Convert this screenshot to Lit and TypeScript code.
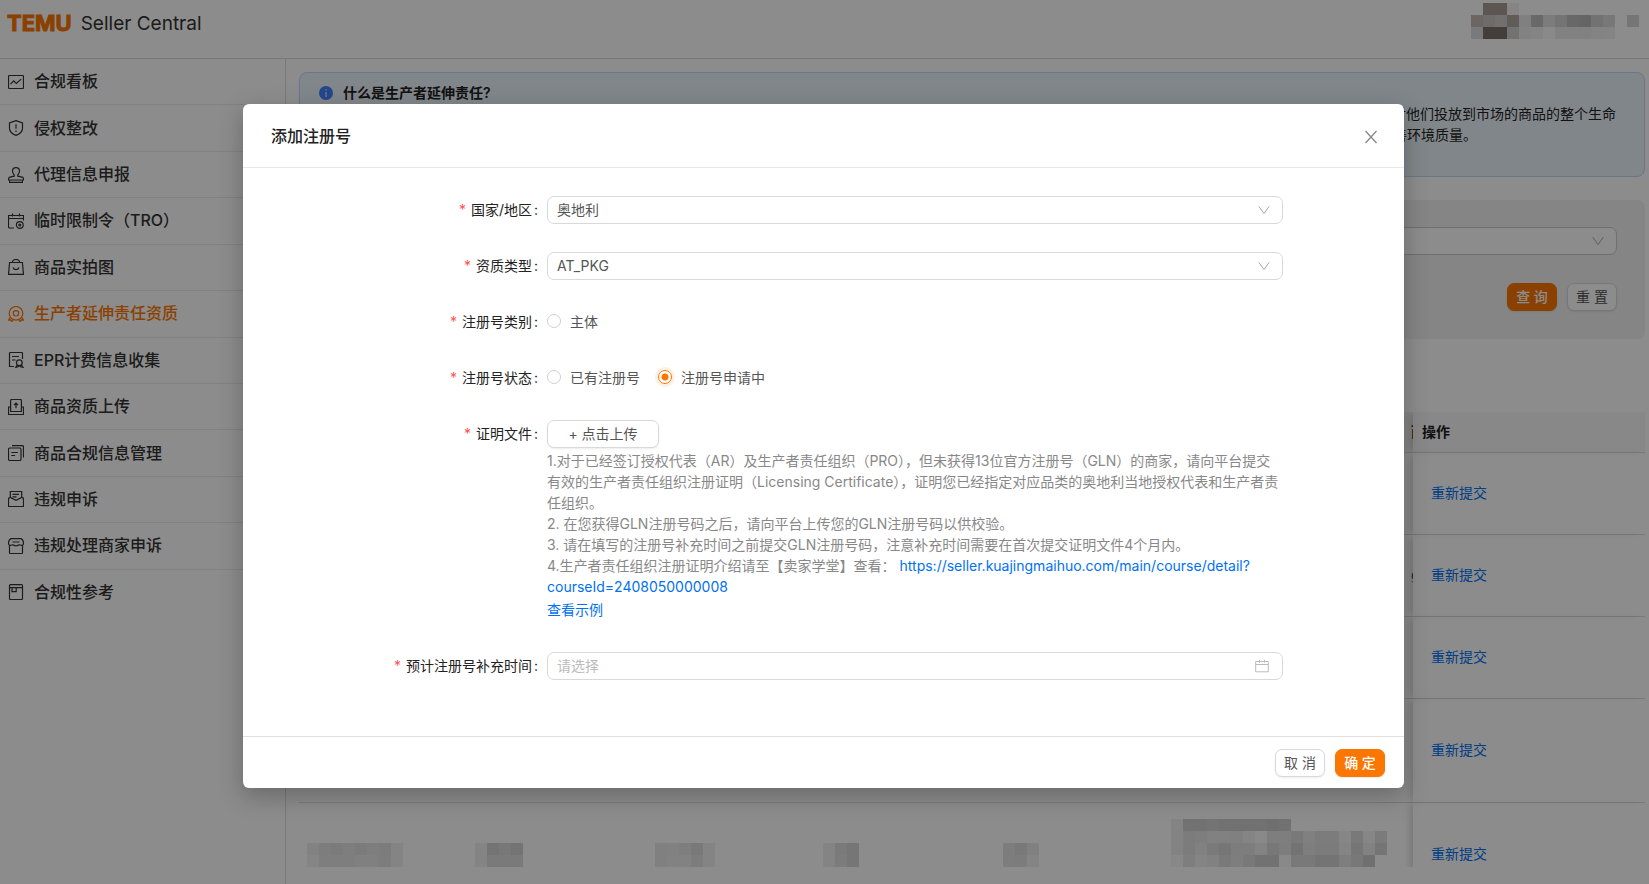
import { LitElement, html, svg, css, nothing } from "lit";
import { customElement, property, state } from "lit/decorators.js";
import { classMap } from "lit/directives/class-map.js";

const icons: Record<string, unknown> = {
  chart: svg`<rect x="0.5" y="1.5" width="15" height="13" rx="1"/><path d="M2.5 10.2 5.7 6.9l2.6 2.5 4.9-4.3"/>`,
  shield: svg`<path d="M8 .6 14.5 3v5.2c0 3.3-2.6 5.7-6.5 7.2-3.9-1.5-6.500-3.900-6.500-7.200V3z"/><path d="M8 4.200v4.600M8 10.400v1.600"/>`,
  stamp: svg`<path d="M6.200 7.800C5 6.600 4.500 5.600 4.500 4.200a3.500 3.500 0 0 1 7 0c0 1.400-.5 2.400-1.700 3.600v1.400l4.400 1c.8.2 1.300.8 1.300 1.500v1.300H.6v-1.300c0-.7.5-1.300 1.300-1.500l4.300-1z"/><path d="M1.600 13.200v2.200h12.800v-2.200"/>`,
  calendar: svg`<path d="M15.500 7.500v-5h-15v11.300a1.200 1.200 0 0 0 1.200 1.200H6M.5 5.500h15M4.500.5v3M11.500.5v3"/><circle cx="11.800" cy="12" r="3.400"/><circle cx="11.800" cy="12" r="1"/>`,
  bag: svg`<path d="M1.600 3.500h12.800l1.100 11.900H.5z"/><path d="M4.500 3.500a3.500 3 0 0 1 7 0M5 8.500c.5 1.400 1.600 2.200 3 2.200s2.500-.8 3-2.200"/>`,
  medal: svg`<circle cx="8" cy="7.300" r="6.800"/><circle cx="8" cy="7.300" r="2.700"/><path d="M2.400 11.300.6 14l2.200-.2.900 2 1.800-2.600M13.600 11.300l1.800 2.700-2.200-.2-.9 2-1.800-2.600"/>`,
  bill: svg`<path d="M14.500 7V1.500a1 1 0 0 0-1-1h-11a1 1 0 0 0-1 1v13h4.500M4 4.500h7M4 8h3.500"/><circle cx="11.300" cy="10.800" r="2.900"/><path d="m9.300 12.900-1.500 2.400 1.700-.1M13.300 12.900l1.700 2.400-1.700-.1M9.500 15l1.800-1.300L13.200 15"/>`,
  upload: svg`<path d="M2.600 12.500v-11a1 1 0 0 1 1-1h8.800a1 1 0 0 1 1 1v11z"/><path d="M2.600 8H.5v7.500h15V8h-2.100M8 9.300V4.300M6 6l2-1.900L10 6"/>`,
  docs: svg`<rect x="0.500" y="3" width="12.500" height="12.500" rx="1.200"/><path d="M4 .6h10.300a1.200 1.200 0 0 1 1.200 1.200v10.700M3.300 7.500h6.500M3.300 10.500h3.800"/>`,
  appeal: svg`<path d="M2.300 6.500v-6h11.400v6M4.500 3.300h6.500M4.500 5.800h4"/><path d="M.5 7.300 2.300 6.500 8 9.300l5.700-2.800 1.800.8v8.200H.5z"/>`,
  shop: svg`<path d="M3 .6h10c1.500.8 2.500 2.600 2.500 4.400 0 1.500-.8 2.400-1.700 2.400-1.200 0-1.900-.6-2.600-.6s-1.400 1-3.200 1-2.500-1-3.200-1-1.400.6-2.600.6C1.300 7.400.5 6.500.5 5c0-1.800 1-3.600 2.500-4.400z"/><path d="M1.500 7.500v7a1 1 0 0 0 1 1h11a1 1 0 0 0 1-1v-7M4.500 4h7"/>`,
  book: svg`<rect x="1.500" y="0.700" width="13" height="14.800" rx="1"/><path d="M1.500 3.600h13M4 3.600v4h4.200v-4"/>`,
};

const menu: [string, string][] = [
  ["chart", "合规看板"],
  ["shield", "侵权整改"],
  ["stamp", "代理信息申报"],
  ["calendar", "临时限制令（TRO）"],
  ["bag", "商品实拍图"],
  ["medal", "生产者延伸责任资质"],
  ["bill", "EPR计费信息收集"],
  ["upload", "商品资质上传"],
  ["docs", "商品合规信息管理"],
  ["appeal", "违规申诉"],
  ["shop", "违规处理商家申诉"],
  ["book", "合规性参考"],
];

const accountTiles = [
  "#fff #a89c95 #a89c95 #f4f2f0 - - - - - - - - - -",
  "#c4bab3 #c9c3c0 #d0ccca #b3a8a2 #e9e9e9 #bfbfbf #e2e2e2 #d4d4d4 #bdbdbd #b9b9b9 #cfcfcf #dadada - #d8d8d8",
  "#dedede #7b716b #7b716b #cfcfcf #ededed #f0f0f0 #fafafa #ebebeb #ebebeb #ececec #efefef #f0f0f0 - -",
];

const rowTiles: string[][] = [
  ["#ededed #e4e4e4 #e1e1e1 #e6e6e6 #e1e1e1 #e6e6e6 #e2e2e2 #f1f1f1", "#f3f3f3 #e6e6e6 #e6e6e6 #e6e6e6 #e9e9e9 #e9e9e9 #e4e4e4 #f1f1f1"],
  ["#f0f0f0 #d4d4d4 #dadada #d4d4d4", "#f0f0f0 #dedede #dedede #dedede"],
  ["#eaeaea #ebebeb #e5e5e5 #dcdcdc #f0f0f0", "#eaeaea #ededed #ededed #e4e4e4 #f0f0f0"],
  ["#f0f0f0 #dfdfdf #d8d8d8", "#f0f0f0 #e2e2e2 #d8d8d8"],
  ["#e4e4e4 #dddddd #eaeaea", "#e4e4e4 #e2e2e2 #f1f1f1"],
  [
    "#f0f0f0 #d0d0d0 #d0d0d0 #d4d4d4 #cecece #cecece #cecece #cecece #cacaca #cecece - - - - - - - -",
    "#eeeeee #e2e2e2 #e6e6e6 #ebebeb #ebebeb #e9e9e9 #f0f0f0 #fafafa #e6e6e6 #e6e6e6 #dcdcdc #eaeaea #e2e2e2 #e2e2e2 #f4f4f4 #dcdcdc #f4f4f4 #e0e0e0",
    "#eeeeee #e2e2e2 #ebebeb #dedede #d8d8d8 #e4e4e4 #e4e4e4 #efefef #dadada #e4e4e4 #d2d2d2 #e6e6e6 #e1e1e1 #e1e1e1 #f0f0f0 #d8d8d8 #ededed #d6d6d6",
    "#f8f8f8 #e6e6e6 #f0f0f0 #ebebeb #dcdcdc #e6e6e6 #dcdcdc #d0d0d0 #d0d0d0 #fafafa #dcdcdc #dcdcdc #d4d4d4 #d4d4d4 #e6e6e6 #dadada #cccccc -",
  ],
];

const arrow = html`<svg class="arrow" viewBox="0 0 12 12" aria-hidden="true"><path d="M.7 2.200 6 9.600l5.300-7.400"/></svg>`;

@customElement("pixel-tiles")
class PixelTiles extends LitElement {
  @property({ attribute: false }) rows: string[] = [];
  static styles = css`
    :host { display: block; }
    .line { display: flex; }
    .tile { width: 12px; height: 12px; flex: none; }
  `;
  render() {
    return this.rows.map(
      (row) => html`<div class="line">
        ${row.split(" ").map((c) => html`<i class="tile" style=${c === "-" ? nothing : `background:${c}`}></i>`)}
      </div>`
    );
  }
}

@customElement("app-root")
class AppRoot extends LitElement {
  @state() private status = "pending";

  static styles = css`
    :host {
      display: block;
      height: 100vh;
      overflow: hidden;
      position: relative;
      background: #fff;
      color: #333;
      font: 14px/21px Inter, "Noto Sans CJK SC", sans-serif;
    }
    * { box-sizing: border-box; }
    button, input, select { font: inherit; color: inherit; margin: 0; }
    a { color: #0071f3; text-decoration: none; }
    svg { fill: none; stroke: currentColor; display: block; flex: none; }

    .page { height: 100%; display: flex; flex-direction: column; }
    .header {
      height: 59px;
      flex: none;
      display: flex;
      justify-content: space-between;
      align-items: flex-start;
      border-bottom: 1px solid #dcdcdc;
      padding: 3px 10px 0 7px;
    }
    .brand { display: flex; align-items: center; gap: 9px; height: 40px; }
    .logo { font-size: 22px; font-weight: 700; color: #fb7701; -webkit-text-stroke: 1px #fb7701; }
    .product { font-size: 19px; }
    .body { flex: 1; min-height: 0; display: flex; }

    .side { width: 286px; flex: none; border-right: 1px solid #dcdcdc; }
    .menu { list-style: none; margin: 0; padding: 0; display: grid; grid-auto-rows: 1fr; min-height: 557px; }
    .entry { border-bottom: 1px solid #ebebeb; display: flex; }
    .entry:last-child { border-color: transparent; }
    .entry a { flex: 1; display: flex; align-items: center; gap: 10px; padding-left: 8px; font-size: 16px; font-weight: 500; color: #333; }
    .entry svg { width: 16px; height: 16px; stroke-width: 1.2; }
    .entry .current { color: #fb7701; }

    .main { flex: 1; min-width: 0; padding: 13px 4px 17px 13px; display: flex; flex-direction: column; }
    .notice {
      flex: none;
      height: 105px;
      border: 1px solid #c0d8ff;
      border-radius: 8px;
      background: #ebf5fc;
      padding: 9px 27px 0 19px;
      display: flex;
      gap: 10px;
    }
    .notice svg { width: 14px; height: 14px; margin-top: 4px; }
    .notice h2 { margin: 0; font-size: 14px; line-height: 21px; font-weight: 600; color: #222; }
    .notice p { margin: 0; color: #222; }

    .filters {
      flex: none;
      margin-top: 23px;
      height: 139px;
      border-radius: 8px;
      background: #f2f2f2;
      padding: 27px 28px;
      display: flex;
      flex-direction: column;
      align-items: flex-end;
      gap: 28px;
    }
    .filters .field { width: 100%; }
    .actions { display: flex; gap: 10px; }

    .field { position: relative; display: flex; align-items: center; }
    .box {
      width: 100%;
      height: 28px;
      border: 1px solid #d9d9d9;
      border-radius: 7px;
      background: #fff;
      padding: 0 32px 1px 9px;
      color: #555;
      appearance: none;
      outline: none;
    }
    .filters .box { border-color: #ccc; }
    .box::placeholder { color: #bbb; opacity: 1; }
    .arrow { position: absolute; right: 13px; width: 12px; height: 12px; color: #aaa; pointer-events: none; }
    .cal { position: absolute; right: 14px; width: 14px; height: 14px; color: #bbb; pointer-events: none; }

    .btn {
      height: 28px;
      width: 50px;
      padding: 0 0 1px;
      border: 1px solid #d9d9d9;
      border-radius: 7px;
      background: #fff;
      color: #555;
      line-height: 20px;
      white-space: nowrap;
      box-shadow: 0 1px 2px rgba(0, 0, 0, 0.08);
    }
    .btn.primary { background: #fb7701; border-color: #fb7701; color: #fff; font-weight: 500; }
    .btn.upload { width: 112px; }

    .scroll { flex: 1; min-height: 0; margin-top: 73px; overflow: hidden; }
    .grid { width: 100%; border-collapse: separate; border-spacing: 0; table-layout: fixed; }
    .grid th { height: 41px; text-align: left; font-weight: 600; color: #222; background: #f7f7f7; }
    .grid th, .grid td { border-bottom: 1px solid #dcdcdc; padding: 0 8px; vertical-align: middle; }
    .grid .tail { overflow: hidden; white-space: nowrap; padding: 0 0 2px 8px; text-overflow: clip; }
    .grid .ops { padding: 0 0 2px 18px; box-shadow: -6px 0 6px -2px rgba(0, 0, 0, 0.12); }
    .grid th.ops { padding-left: 9px; }
    .grid .item { padding-bottom: 24px; }
    .short td { height: 82px; }
    .tall td { height: 104px; }
    .c1 { width: 168px; }
    .c2 { width: 180px; }
    .c6 { width: 240px; }
    .c7 { width: 10px; }
    .c8 { width: 232px; }

    .mask {
      position: absolute;
      inset: 0;
      background: rgba(0, 0, 0, 0.45);
      padding: 104px 245px 0 243px;
    }
    .dialog { border-radius: 6px; background: #fff; box-shadow: 0 8px 24px rgba(0, 0, 0, 0.25); }
    .top {
      height: 64px;
      display: flex;
      align-items: center;
      justify-content: space-between;
      padding: 2px 26px 0 28px;
      border-bottom: 1px solid #e8e8e8;
    }
    .top h1 { margin: 0; font-size: 16px; font-weight: 500; color: #222; }
    .close { border: 0; background: none; padding: 0; width: 14px; height: 14px; color: #888; }
    .close svg { width: 14px; height: 14px; }
    .form { display: grid; gap: 28px; padding: 28px 121px 56px 0; }
    .row { display: grid; grid-template-columns: 295px minmax(0, 1fr); column-gap: 9px; border: 0; margin: 0; padding: 0; }
    .name { line-height: 28px; text-align: right; color: #222; }
    .name::before { content: "*"; color: #ff5252; margin-right: 5px; }
    .name::after { content: ":"; margin-left: 2px; }
    .choices { display: flex; align-items: center; gap: 18px; height: 26px; color: #555; }
    .choice { display: flex; align-items: center; gap: 9px; }
    .radio {
      appearance: none;
      width: 14px;
      height: 14px;
      border: 1px solid #d0d0d0;
      border-radius: 50%;
      background: #fff;
    }
    .radio:checked {
      border-color: #fb7701;
      background: radial-gradient(circle, #fb7701 3px, #fff 4px);
      box-shadow: 0 0 0 3px #fff0e4;
    }
    .help { margin-top: 2px; color: #888; }
    .help p { margin: 0; }
    .sample { display: block; line-height: 26px; margin-bottom: 1px; }
    .foot {
      border-top: 1px solid #e0e0e0;
      padding: 12px 19px 11px;
      display: flex;
      justify-content: flex-end;
      gap: 10px;
    }
  `;

  private renderMenu() {
    return html`<nav class="side">
      <ul class="menu">
        ${menu.map(
          ([icon, label]) => html`<li class="entry">
            <a href="#" class=${classMap({ current: icon === "medal" })}>
              <svg viewBox="0 0 16 16" aria-hidden="true">${icons[icon]}</svg>${label}
            </a>
          </li>`
        )}
      </ul>
    </nav>`;
  }

  private renderTable() {
    return html`<div class="scroll">
      <table class="grid">
        <colgroup>
          <col class="c1" /><col class="c2" /><col class="c1" /><col class="c2" />
          <col class="c1" /><col class="c6" /><col class="c7" /><col class="c8" />
        </colgroup>
        <thead>
          <tr>
            <th></th><th></th><th></th><th></th><th></th><th></th>
            <th class="tail">而</th>
            <th class="ops">操作</th>
          </tr>
        </thead>
        <tbody>
          ${[0, 1, 2, 3, 4].map(
            (i) => html`<tr class=${i < 3 ? "short" : "tall"}>
              ${rowTiles.map(
                (tiles) => html`<td class=${classMap({ item: tiles.length > 2 })}>
                  ${i === 4 ? html`<pixel-tiles .rows=${tiles}></pixel-tiles>` : nothing}
                </td>`
              )}
              <td class="tail">${i === 1 ? "g" : nothing}</td>
              <td class="ops"><a href="#">重新提交</a></td>
            </tr>`
          )}
        </tbody>
      </table>
    </div>`;
  }

  private renderStatus(value: string, label: string) {
    return html`<label class="choice">
      <input
        class="radio"
        type="radio"
        name="status"
        .checked=${this.status === value}
        @change=${() => (this.status = value)}
      />${label}
    </label>`;
  }

  private renderDialog() {
    return html`<div class="mask">
      <section class="dialog" role="dialog" aria-modal="true" aria-labelledby="title">
        <header class="top">
          <h1 id="title">添加注册号</h1>
          <button class="close" aria-label="关闭">
            <svg viewBox="0 0 14 14" stroke-width="1.300"><path d="M1.500 1 12.500 13M12.500 1 1.500 13" /></svg>
          </button>
        </header>
        <form class="form">
          <div class="row">
            <label class="name" for="country">国家/地区</label>
            <div class="field"><select class="box" id="country"><option>奥地利</option></select>${arrow}</div>
          </div>
          <div class="row">
            <label class="name" for="kind">资质类型</label>
            <div class="field"><select class="box" id="kind"><option>AT_PKG</option></select>${arrow}</div>
          </div>
          <div class="row" role="radiogroup" aria-labelledby="category">
            <span class="name" id="category">注册号类别</span>
            <div class="choices">
              <label class="choice"><input class="radio" type="radio" name="category" />主体</label>
            </div>
          </div>
          <div class="row" role="radiogroup" aria-labelledby="status">
            <span class="name" id="status">注册号状态</span>
            <div class="choices">
              ${this.renderStatus("existing", "已有注册号")} ${this.renderStatus("pending", "注册号申请中")}
            </div>
          </div>
          <div class="row">
            <label class="name" for="proof">证明文件</label>
            <div>
              <button class="btn upload" id="proof" type="button">+ 点击上传</button>
              <div class="help">
                <p>1.对于已经签订授权代表（AR）及生产者责任组织（PRO），但未获得13位官方注册号（GLN）的商家，请向平台提交有效的生产者责任组织注册证明（Licensing Certificate），证明您已经指定对应品类的奥地利当地授权代表和生产者责任组织。</p>
                <p>2. 在您获得GLN注册号码之后，请向平台上传您的GLN注册号码以供校验。</p>
                <p>3. 请在填写的注册号补充时间之前提交GLN注册号码，注意补充时间需要在首次提交证明文件4个月内。</p>
                <p>4.生产者责任组织注册证明介绍请至【卖家学堂】查看： <a href="https://seller.kuajingmaihuo.com/main/course/detail?courseId=2408050000008">https://seller.kuajingmaihuo.com/main/course/detail?<wbr />courseId=2408050000008</a></p>
              </div>
              <a class="sample" href="#">查看示例</a>
            </div>
          </div>
          <div class="row">
            <label class="name" for="date">预计注册号补充时间</label>
            <div class="field">
              <input class="box" id="date" type="text" placeholder="请选择" />
              <svg class="cal" viewBox="0 0 14 14"><path d="M.7 2.500h12.600v10.300H.7zM.7 5.500h12.600M4.500.8v3M9.500.8v3" /></svg>
            </div>
          </div>
        </form>
        <footer class="foot">
          <button class="btn">取 消</button>
          <button class="btn primary">确 定</button>
        </footer>
      </section>
    </div>`;
  }

  render() {
    return html`<div class="page">
        <header class="header">
          <div class="brand"><span class="logo">TEMU</span><span class="product">Seller Central</span></div>
          <pixel-tiles .rows=${accountTiles}></pixel-tiles>
        </header>
        <div class="body">
          ${this.renderMenu()}
          <main class="main">
            <section class="notice">
              <svg viewBox="0 0 14 14" aria-hidden="true">
                <circle cx="7" cy="7" r="7" fill="#4080ff" stroke="none" />
                <path d="M7 3.200v1.300M7 6v5" stroke="#fff" />
              </svg>
              <div>
                <h2>什么是生产者延伸责任?</h2>
                <p>生产者延伸责任（Extended Producer Responsibility）是一项旨在减少商品对环境影响的环境政策，该政策明确要求所有在欧盟当地市场上销售商品的生产者以及品牌方对他们投放到市场的商品的整个生命周期负责，包括商品的设计、生产、包装、运输、使用以及废弃后的回收、再利用和最终处置，从而促进整个社会对资源的循环利用，尽可能减少废弃物的产生并持续地改善环境质量。</p>
              </div>
            </section>
            <section class="filters">
              <div class="field"><select class="box" aria-label="状态"></select>${arrow}</div>
              <div class="actions">
                <button class="btn primary">查 询</button>
                <button class="btn">重 置</button>
              </div>
            </section>
            ${this.renderTable()}
          </main>
        </div>
      </div>
      ${this.renderDialog()}`;
  }
}
